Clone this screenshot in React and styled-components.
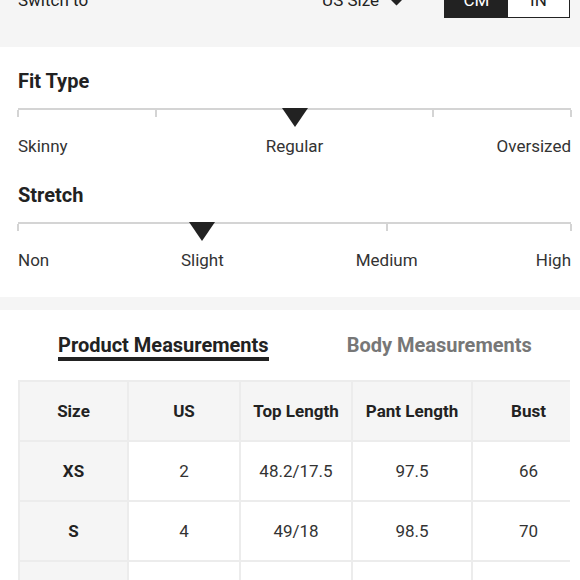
import React from 'react'
import styled, { createGlobalStyle } from 'styled-components'

const GlobalStyle = createGlobalStyle`
  body {
    margin: 0;
    background: #fff;
    font-family: Roboto, "Liberation Sans", sans-serif;
    color: #222;
    overflow: hidden;
  }
`

const Page = styled.div`
  width: 580px;
`

const SwitchBar = styled.div`
  display: flex;
  align-items: center;
  margin-top: -18px;
  padding: 0 10px 29px 18px;
  background: #f5f5f5;
  font-size: 17px;
  color: #222;
`

const SizePicker = styled.div`
  display: flex;
  align-items: center;
  gap: 10px;
  margin-left: auto;
  margin-right: 40px;
`

const UnitToggle = styled.div`
  display: flex;
  height: 34px;
  border: 1px solid #222;
`

const UnitButton = styled.div`
  width: ${p => p.$w}px;
  display: flex;
  align-items: center;
  justify-content: center;
  background: ${p => (p.$active ? '#222' : '#fff')};
  color: ${p => (p.$active ? '#fff' : '#222')};
`

const Section = styled.div`
  padding: 22px 9px 27px 18px;
`

const Heading = styled.h3`
  margin: 0;
  font-size: 20px;
  line-height: 24px;
  font-weight: 700;
  color: #222;
`

const Scale = styled.div`
  margin-top: 15px;
  & + h3 {
    margin-top: 27px;
  }
`

const Track = styled.div`
  position: relative;
  height: 18px;
  border-top: 2px solid #d4d4d4;
`

const Tick = styled.span`
  position: absolute;
  top: 0;
  width: 2px;
  height: 7px;
  margin-left: -1px;
  background: #d4d4d4;
`

const Marker = styled.span`
  position: absolute;
  top: -2px;
  margin-left: -13px;
  width: 0;
  height: 0;
  border-left: 13px solid transparent;
  border-right: 13px solid transparent;
  border-top: 19px solid #222;
`

const Labels = styled.div`
  position: relative;
  height: 20px;
  margin-top: 8px;
`

const Label = styled.span`
  position: absolute;
  top: 0;
  font-size: 17px;
  line-height: 20px;
  color: #333;
  white-space: nowrap;
  transform: ${p =>
    p.$align === 'start' ? 'none' : p.$align === 'end' ? 'translateX(-100%)' : 'translateX(-50%)'};
`

const Divider = styled.div`
  height: 13px;
  background: #f5f5f5;
`

const Tabs = styled.div`
  display: flex;
  gap: 78px;
  padding: 24px 0 0 58px;
`

const Tab = styled.div`
  font-size: 20px;
  line-height: 22px;
  font-weight: 700;
  padding-bottom: 1px;
  color: ${p => (p.$active ? '#222' : '#777')};
  border-bottom: 4px solid ${p => (p.$active ? '#222' : 'transparent')};
`

const TableWrap = styled.div`
  margin: 19px 10px 0 18px;
  overflow: hidden;
`

const Table = styled.table`
  border-collapse: collapse;
  table-layout: fixed;
  width: 566px;
  font-size: 17px;
`

const Cell = styled.td`
  height: 58px;
  padding: 0;
  text-align: center;
  border: 2px solid #ececec;
  color: ${p => (p.$strong ? '#222' : '#333')};
  font-weight: ${p => (p.$strong ? 700 : 400)};
  background: ${p => (p.$shade ? '#f5f5f5' : '#fff')};
`

function Caret() {
  return (
    <svg width="15" height="11" viewBox="0 0 15 11">
      <path d="M0 3 L3 0 L7.5 4.5 L12 0 L15 3 L7.5 10.5 Z" fill="#222" />
    </svg>
  )
}

function FitScale({ ticks, marker, labels }) {
  return (
    <Scale>
      <Track>
        {ticks.map(t => (
          <Tick key={t} style={{ left: `${t * 100}%` }} />
        ))}
        <Marker style={{ left: `${marker * 100}%` }} />
      </Track>
      <Labels>
        {labels.map(l => (
          <Label key={l.text} $align={l.align} style={{ left: `${l.at * 100}%` }}>
            {l.text}
          </Label>
        ))}
      </Labels>
    </Scale>
  )
}

const columns = [
  { name: 'Size', w: 109 },
  { name: 'US', w: 112 },
  { name: 'Top Length', w: 112 },
  { name: 'Pant Length', w: 120 },
  { name: 'Bust', w: 113 },
]

const rows = [
  ['XS', '2', '48.2/17.5', '97.5', '66'],
  ['S', '4', '49/18', '98.5', '70'],
  ['M', '6', '50/18.5', '99.5', '74'],
]

export default function App() {
  return (
    <Page>
      <GlobalStyle />
      <SwitchBar>
        <span>Switch to</span>
        <SizePicker>
          <span>US Size</span>
          <Caret />
        </SizePicker>
        <UnitToggle>
          <UnitButton $active $w={63}>CM</UnitButton>
          <UnitButton $w={61}>IN</UnitButton>
        </UnitToggle>
      </SwitchBar>

      <Section>
        <Heading>Fit Type</Heading>
        <FitScale
          ticks={[0, 0.25, 0.5, 0.75, 1]}
          marker={0.5}
          labels={[
            { text: 'Skinny', at: 0, align: 'start' },
            { text: 'Regular', at: 0.5, align: 'center' },
            { text: 'Oversized', at: 1, align: 'end' },
          ]}
        />
        <Heading>Stretch</Heading>
        <FitScale
          ticks={[0, 1 / 3, 2 / 3, 1]}
          marker={1 / 3}
          labels={[
            { text: 'Non', at: 0, align: 'start' },
            { text: 'Slight', at: 1 / 3, align: 'center' },
            { text: 'Medium', at: 2 / 3, align: 'center' },
            { text: 'High', at: 1, align: 'end' },
          ]}
        />
      </Section>

      <Divider />

      <Tabs>
        <Tab $active>Product Measurements</Tab>
        <Tab>Body Measurements</Tab>
      </Tabs>

      <TableWrap>
        <Table>
          <colgroup>
            {columns.map(c => (
              <col key={c.name} style={{ width: c.w }} />
            ))}
          </colgroup>
          <thead>
            <tr>
              {columns.map(c => (
                <Cell as="th" key={c.name} $strong $shade>
                  {c.name}
                </Cell>
              ))}
            </tr>
          </thead>
          <tbody>
            {rows.map(r => (
              <tr key={r[0]}>
                {r.map((v, i) => (
                  <Cell key={i} $strong={i === 0} $shade={i === 0}>
                    {v}
                  </Cell>
                ))}
              </tr>
            ))}
          </tbody>
        </Table>
      </TableWrap>
    </Page>
  )
}
